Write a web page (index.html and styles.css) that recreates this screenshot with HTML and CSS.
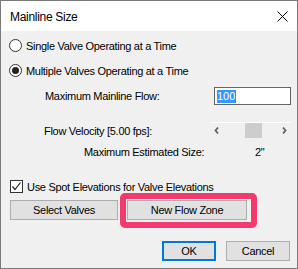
FILE: index.html
```html
<!DOCTYPE html>
<html lang="en">
<head>
    <meta charset="UTF-8">
    <title>Mainline Size</title>
    <link rel="stylesheet" href="styles.css">
</head>
<body>
    <div class="dialog">
        <div class="title-bar">
            <span class="title">Mainline Size</span>
            <svg class="close" width="11" height="11" viewBox="0 0 11 11">
                <path d="M0.5 0.5 L10.5 10.5 M10.5 0.5 L0.5 10.5" stroke="#000" stroke-width="1" fill="none"/>
            </svg>
        </div>
        <div class="content">
            <div class="row option">
                <span class="radio"></span>
                <span>Single Valve Operating at a Time</span>
            </div>
            <div class="row option second">
                <span class="radio checked"></span>
                <span>Multiple Valves Operating at a Time</span>
            </div>
            <div class="row flow-row">
                <span class="label">Maximum Mainline Flow:</span>
                <div class="textbox"><span class="selected">100</span><span class="caret"></span></div>
            </div>
            <div class="row velocity-row">
                <span class="label">Flow Velocity [5.00 fps]:</span>
                <div class="scrollbar">
                    <svg class="arrow" width="17" height="16" viewBox="0 0 17 16">
                        <path d="M8 4.5 L5.5 7.5 L8 10.5" stroke="#606060" stroke-width="1.8" fill="none"/>
                    </svg>
                    <div class="track"><div class="thumb"></div></div>
                    <svg class="arrow" width="17" height="16" viewBox="0 0 17 16">
                        <path d="M9 4.5 L11.5 7.5 L9 10.5" stroke="#606060" stroke-width="1.8" fill="none"/>
                    </svg>
                </div>
            </div>
            <div class="row size-row">
                <span class="label">Maximum Estimated Size:</span>
                <span class="value">2"</span>
            </div>
            <div class="row option check-row">
                <span class="checkbox">
                    <svg width="11" height="11" viewBox="0 0 11 11">
                        <path d="M1.5 5.5 L4 8.5 L9.5 1.5" stroke="#222" stroke-width="1.2" fill="none"/>
                    </svg>
                </span>
                <span>Use Spot Elevations for Valve Elevations</span>
            </div>
            <div class="row button-row">
                <button class="btn select-btn">Select Valves</button>
                <button class="btn zone-btn">New Flow Zone</button>
            </div>
            <div class="row footer">
                <button class="btn ok-btn">OK</button>
                <button class="btn cancel-btn">Cancel</button>
            </div>
        </div>
        <div class="highlight"></div>
    </div>
</body>
</html>
```

FILE: styles.css
```css
body {
    margin: 0;
    font-family: "Liberation Sans", Arial, sans-serif;
    font-size: 11px;
    letter-spacing: -0.3px;
    color: #000;
    background-color: #fff;
}
.dialog {
    position: relative;
    width: 298px;
    height: 269px;
    box-sizing: border-box;
    border: 1px solid #7a7a7a;
    background-color: #f0f0f0;
}
.title-bar {
    height: 30px;
    background-color: #fff;
    display: flex;
    align-items: center;
    justify-content: space-between;
    padding: 0 9px 0 9px;
    font-size: 12px;
}
.title {
    margin-top: 1px;
}
.content {
    padding: 0 6px 0 8px;
}
.row {
    display: flex;
    align-items: center;
}
.option {
    height: 13px;
    margin-top: 8px;
    gap: 4px;
}
.option.second {
    margin-top: 12px;
}
.radio {
    width: 13px;
    height: 13px;
    box-sizing: border-box;
    border: 1px solid #333;
    border-radius: 50%;
    background-color: #fff;
    display: flex;
    align-items: center;
    justify-content: center;
}
.radio.checked::after {
    content: "";
    width: 7px;
    height: 7px;
    border-radius: 50%;
    background-color: #222;
}
.flow-row {
    height: 18px;
    margin-top: 10px;
    justify-content: space-between;
}
.label {
    padding-left: 36px;
}
.textbox {
    width: 77px;
    height: 18px;
    box-sizing: border-box;
    border: 1px solid #646464;
    background-color: #fff;
    display: flex;
    align-items: center;
    padding-left: 2px;
}
.selected {
    background-color: #3399ff;
    color: #fff;
    line-height: 13px;
    letter-spacing: 0;
}
.caret {
    width: 1px;
    height: 13px;
    background-color: #d06a00;
}
.velocity-row {
    height: 17px;
    margin-top: 17px;
    justify-content: space-between;
}
.velocity-row .label {
    padding-left: 35px;
}
.scrollbar {
    width: 81px;
    height: 17px;
    box-sizing: border-box;
    border-top: 1px solid #fff;
    display: flex;
}
.track {
    flex: 1;
    display: flex;
}
.thumb {
    width: 17px;
    height: 15px;
    margin-left: 18px;
    background-color: #cdcdcd;
}
.size-row {
    height: 13px;
    margin-top: 6px;
}
.size-row .label {
    padding-left: 75px;
    width: 171px;
}
.check-row {
    margin-top: 22px;
    padding-left: 1px;
}
.checkbox {
    width: 13px;
    height: 13px;
    box-sizing: border-box;
    border: 1px solid #333;
    background-color: #fff;
    display: flex;
    align-items: center;
    justify-content: center;
}
.btn {
    font-family: "Liberation Sans", Arial, sans-serif;
    font-size: 11px;
    letter-spacing: -0.3px;
    color: #000;
    height: 20px;
    box-sizing: border-box;
    border: 1px solid #adadad;
    background-color: #e1e1e1;
    padding: 0;
    margin: 0;
}
.button-row {
    margin-top: 7px;
    padding-left: 1px;
    gap: 9px;
}
.select-btn {
    width: 108px;
}
.zone-btn {
    width: 120px;
}
.footer {
    margin-top: 21px;
    justify-content: flex-end;
    gap: 10px;
    padding-right: 1px;
}
.ok-btn {
    width: 54px;
    border: 2px solid #0078d7;
}
.cancel-btn {
    width: 64px;
}
.highlight {
    position: absolute;
    left: 119px;
    top: 192px;
    width: 137px;
    height: 35px;
    box-sizing: border-box;
    border: 6px solid #f23a6f;
    border-radius: 5px;
}
```
